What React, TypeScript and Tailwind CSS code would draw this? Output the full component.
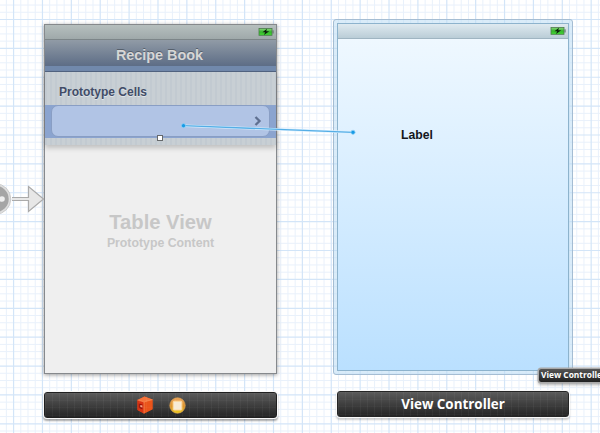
import React from "react";

function Battery() {
  return (
    <svg width="16" height="8" viewBox="0 0 16 8">
      <defs>
        <linearGradient id="battery" x1="0" y1="0" x2="0" y2="1">
          <stop offset="0" stopColor="#8bd67c" />
          <stop offset=".5" stopColor="#35b52b" />
          <stop offset="1" stopColor="#43da34" />
        </linearGradient>
      </defs>
      <rect x="1" y=".5" width="13" height="6.800" fill="url(#battery)" stroke="#4b7a4b" strokeWidth=".8" />
      <rect x="14.400" y="2.300" width="1.200" height="3.200" fill="#63756b" />
      <path d="M9 .8 4.500 4.200h2.700L6 7l5.200-3.700H8.200z" fill="#0b1d0b" />
    </svg>
  );
}

function Cube() {
  return (
    <svg width="16" height="18" viewBox="0 0 16 18">
      <path d="M.5 4 7.500.5l8 3v9.700L7 17.500.5 14z" fill="#e84a16" />
      <path d="M.5 4 7.500.5l8 3L7 6z" fill="#f4733a" />
      <path d="M7 6l8.500-2.500v9.700L7 17.500z" fill="#ea541a" />
      <path d="M.5 4 7 6v11.500L.5 14z" fill="#d93312" />
      <path d="M1.800 7.500l3.600 1v4.800l-3.600-1.200z" fill="#981207" />
      <path d="M3.300 9l2.100.5v2l-2.100-.5z" fill="#f7a184" />
      <path d="M.5 4 7 6l8.500-2.500M7 6v11.500" fill="none" stroke="#ffab70" strokeWidth=".5" />
    </svg>
  );
}

function Controller() {
  return (
    <svg width="17" height="17" viewBox="0 0 17 17">
      <defs>
        <linearGradient id="amber" x1="0" y1="0" x2="0" y2="1">
          <stop offset="0" stopColor="#eda35c" />
          <stop offset=".6" stopColor="#dc9427" />
          <stop offset="1" stopColor="#efd51b" />
        </linearGradient>
      </defs>
      <circle cx="8.500" cy="8.500" r="7.700" fill="url(#amber)" stroke="#d9a052" strokeWidth=".8" />
      <rect x="4.200" y="4.200" width="8.600" height="8.800" rx=".8" fill="#f7ead5" stroke="#ffd99c" />
    </svg>
  );
}

const PITCH = 7.22;

function Grid() {
  const lines = Array.from({ length: 88 }, (_, i) => i);
  return (
    <svg className="absolute inset-0" width="600" height="433" viewBox="0 0 600 433">
      {[false, true].map((major) => (
        <g key={String(major)} stroke={major ? "#d3e5f8" : "#e9f1fb"} strokeWidth={major ? 1.2 : 1}>
          {lines
            .filter((i) => (i % 4 === 0) === major)
            .map((i) => (
              <React.Fragment key={i}>
                <path d={`M${-15.3 + i * PITCH} 0V433`} />
                <path d={`M0 ${-9.4 + i * PITCH}H600`} />
              </React.Fragment>
            ))}
        </g>
      ))}
    </svg>
  );
}

function DockSheen() {
  return (
    <div className="absolute inset-0 bg-[repeating-linear-gradient(90deg,#ffffff0a_0px,#ffffff0a_1px,transparent_1px,transparent_7.22px),repeating-linear-gradient(180deg,#ffffff06_0px,#ffffff06_1px,transparent_1px,transparent_7.22px)]" />
  );
}

export default function App() {
  return (
    <main className="relative h-[433px] w-[600px] overflow-hidden bg-white font-['Liberation_Sans',sans-serif]">
      <Grid />

      <section className="absolute left-[44px] top-[24px] flex h-[350px] w-[233px] flex-col border border-[#86898c] bg-[#efefef] shadow-[0_1px_4px_rgba(0,0,0,0.4)]">
        <header className="flex h-[15px] shrink-0 items-center justify-end border-b border-[#7c8588] bg-linear-to-b from-[#b6bfbe] to-[#9fa9aa] pr-[2px]">
          <Battery />
        </header>
        <h1 className="flex h-[26px] shrink-0 items-center justify-center bg-linear-to-b from-[#919ba6] to-[#5d6d86] pr-[2px] pt-[5px] text-[14.400px] font-bold text-[#d6d6d6] [text-shadow:0_-1px_0_#56606c]">
          Recipe Book
        </h1>
        <div className="h-[6px] shrink-0 border-b border-[#526482] bg-[#7189ac]" />
        <div className="flex h-[73px] shrink-0 flex-col bg-[repeating-linear-gradient(90deg,#c2cad1_0px,#c2cad1_2px,#c8cfd4_2px,#c8cfd4_5px)] shadow-[0_3px_5px_rgba(0,0,0,0.2)]">
          <h2 className="flex h-[33px] shrink-0 items-center pl-[14px] pt-[7px] text-[12px] font-bold text-[#414c67] [text-shadow:0_1px_0_#e0e5e9]">
            Prototype Cells
          </h2>
          <div className="relative flex h-[33px] bg-[#8ba4cf] pl-[6px] pr-[6px]">
            <div className="flex h-[32px] w-full items-center justify-end rounded-[7px] border border-[#899ec4] bg-[#b1c4e5] pr-[7px]">
              <svg width="8" height="10" viewBox="0 0 8 10">
                <path d="m1.500 1 4 4-4 4" fill="none" stroke="#5f7090" strokeWidth="2.300" />
              </svg>
            </div>
            <i className="absolute left-[112px] top-[30px] h-[6px] w-[6px] border border-[#66696c] bg-white" />
          </div>
        </div>
        <div className="flex flex-col items-center pt-[66px] font-bold text-[#c7c7c7]">
          <strong className="text-[20.200px] leading-[22px]">Table View</strong>
          <span className="mt-[3px] text-[12.300px] leading-[15px]">Prototype Content</span>
        </div>
      </section>

      <section className="absolute left-[333px] top-[19px] flex h-[356px] w-[240px] rounded-[3px] border border-[#a5bdd3] bg-[#bcdcf4]/55 p-[3px]">
        <div className="flex w-full flex-col border border-[#8db3cd] bg-linear-to-b from-[#f1f9ff] to-[#bae0ff]">
          <header className="flex h-[15px] shrink-0 items-center justify-end border-b border-[#9fb5c2] bg-linear-to-b from-[#dfeaf0] to-[#bacdd7] pb-px pr-[2px]">
            <Battery />
          </header>
          <span className="pl-[63px] pt-[89px] text-[12.200px] font-bold leading-[15px] text-[#14171b]">Label</span>
        </div>
      </section>

      <footer className="absolute left-[44px] top-[392px] flex h-[26px] w-[233px] items-center justify-center gap-[16px] rounded-[3px] border border-[#202020] bg-linear-to-b from-[#5b5b5b] to-[#252525] pl-[2px] shadow-[0_0_0_1px_#f9f9f9,0_2px_2px_1px_rgba(0,0,0,0.35)]">
        <DockSheen />
        <Cube />
        <Controller />
      </footer>
      <footer className="absolute left-[337px] top-[391px] flex h-[26px] w-[232px] items-center justify-center rounded-[3px] border border-[#252525] bg-linear-to-b from-[#5b5b5b] to-[#252525] pt-px font-['Open_Sans',sans-serif] text-[13.400px] font-bold text-white shadow-[0_0_0_1px_#f9f9f9,0_2px_2px_1px_rgba(0,0,0,0.2)]">
        <DockSheen />
        View Controller
      </footer>
      <div className="absolute left-[539px] top-[369px] flex h-[13px] w-[72px] items-center whitespace-nowrap rounded-[2px] bg-linear-to-b from-[#555] to-[#222] pl-[2px] font-['Open_Sans',sans-serif] text-[8.400px] font-bold text-white shadow-[0_0_0_1.500px_#a9a9a9,0_2px_3px_1px_rgba(0,0,0,0.3)]">
        View Controller
      </div>

      <svg className="absolute inset-0" width="600" height="433" viewBox="0 0 600 433">
        <circle cx="-4.500" cy="199" r="14.200" fill="#a5a5a5" stroke="#dedede" strokeWidth="2" />
        <circle cx="-4.500" cy="199" r="15.300" fill="none" stroke="#b5b5b5" strokeWidth=".6" />
        <circle cx="2" cy="199" r="2.800" fill="#eee" />
        <path d="M12 197.500h16.500v-11L43.500 199l-15 12.500v-11H12" fill="#e7e7e7" stroke="#ababab" strokeWidth="1.200" />
        <path d="M183.500 125.700 353 132.300" stroke="#d8efff" strokeWidth="2.500" />
        <path d="M183.500 125.700 353 132.300" stroke="#55aee6" strokeWidth="1.300" />
        <g fill="#179be6" stroke="#9bd4f6" strokeWidth=".7">
          <circle cx="183.500" cy="125.700" r="2.100" />
          <circle cx="353" cy="132.300" r="2.100" />
        </g>
      </svg>
    </main>
  );
}
